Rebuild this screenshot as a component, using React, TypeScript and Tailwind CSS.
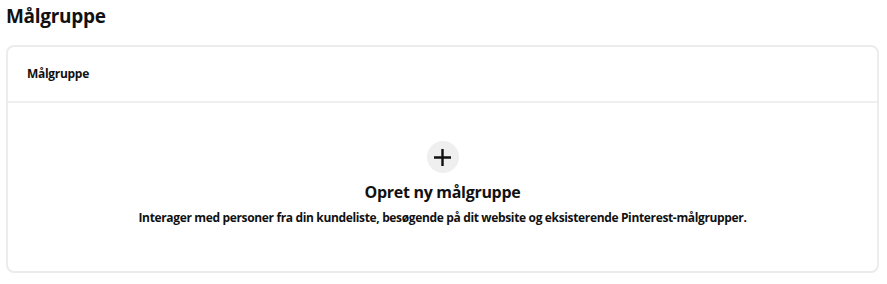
import React from 'react';

export default function App() {
  return (
    <div className="w-[887px] h-[284px] bg-white pl-[6px] pr-[8px] pt-[3px] text-[#111111] font-['Open_Sans',sans-serif]">
      <h1 className="text-[19px] font-bold leading-[26px] tracking-[-0.3px]">Målgruppe</h1>
      <div className="mt-[16px] h-[228px] border-2 border-[#ececec] rounded-[8px] flex flex-col">
        <div className="h-[56px] flex items-center px-[19px] border-b-2 border-[#efefef]">
          <span className="text-[12px] font-bold tracking-[-0.3px]">Målgruppe</span>
        </div>
        <div className="flex-1 flex flex-col items-center pt-[38px]">
          <button className="w-[32px] h-[32px] rounded-full bg-[#efefef] flex items-center justify-center">
            <svg viewBox="0 0 17 17" width="17" height="17" fill="none" stroke="#111111" strokeWidth="2.4">
              <path d="M8.5 0v17M0 8.5h17" />
            </svg>
          </button>
          <h2 className="mt-[8px] text-[16px] font-bold leading-[22px] tracking-[-0.3px]">Opret ny målgruppe</h2>
          <p className="mt-[7px] text-[12px] font-bold leading-[16px] tracking-[-0.35px]">
            Interager med personer fra din kundeliste, besøgende på dit website og eksisterende Pinterest-målgrupper.
          </p>
        </div>
      </div>
    </div>
  );
}
